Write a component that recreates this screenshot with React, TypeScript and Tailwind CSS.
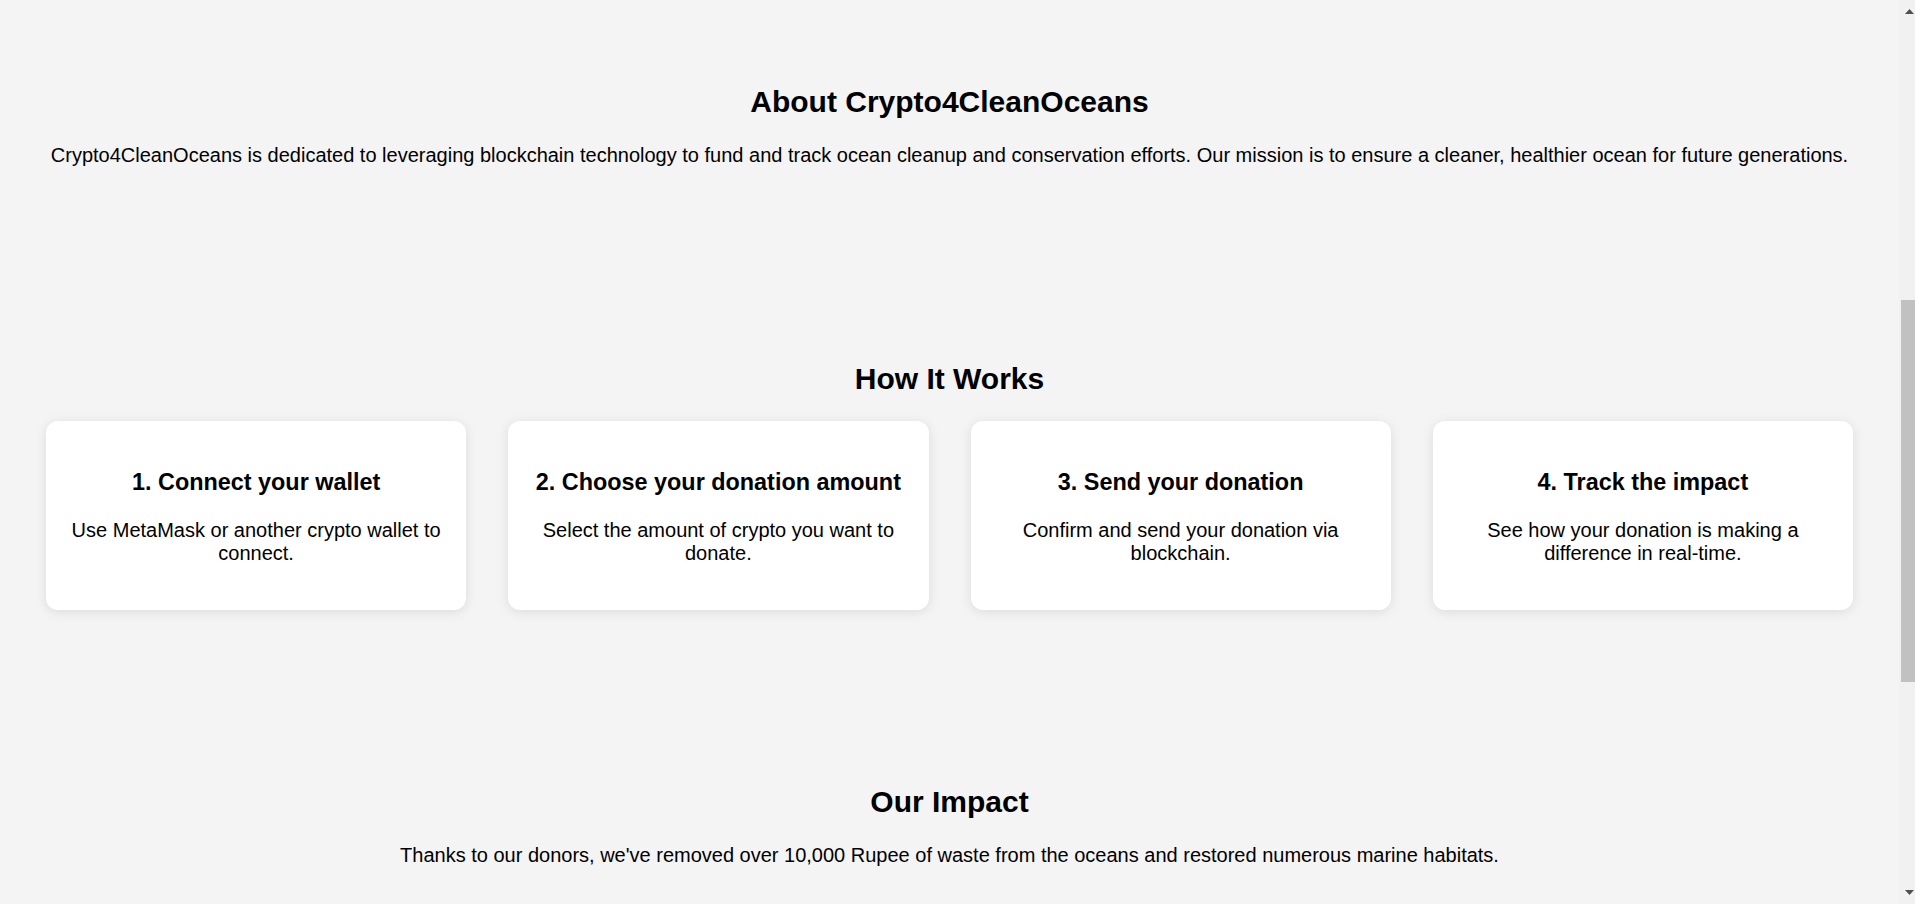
import React from "react";

const steps = [
  { title: "1. Connect your wallet", text: "Use MetaMask or another crypto wallet to connect." },
  { title: "2. Choose your donation amount", text: "Select the amount of crypto you want to donate." },
  { title: "3. Send your donation", text: "Confirm and send your donation via blockchain." },
  { title: "4. Track the impact", text: "See how your donation is making a difference in real-time." },
];

function Scrollbar() {
  return (
    <div className="flex w-[16px] shrink-0 flex-col bg-[#f1f1f1]">
      <div className="flex pl-[6px] pt-[9px]">
        <svg width="9" height="5" viewBox="0 0 9 5">
          <polygon points="4.5,0 9,5 0,5" fill="#505050" />
        </svg>
      </div>
      <div className="ml-[2px] mt-[286px] h-[382px] bg-[#c1c1c1]" />
      <div className="flex-1" />
      <div className="flex pb-[9px] pl-[6px]">
        <svg width="9" height="5" viewBox="0 0 9 5">
          <polygon points="0,0 9,0 4.5,5" fill="#505050" />
        </svg>
      </div>
    </div>
  );
}

export default function App() {
  return (
    <div
      className="flex h-screen overflow-hidden bg-[#f4f4f4] leading-[normal] text-black"
      style={{ fontFamily: '"Liberation Sans", Arial, sans-serif' }}
    >
      <main className="min-w-0 flex-1 overflow-hidden text-center">
        <section className="px-[25px] pt-[60px] pb-[150px]">
          <h2 className="my-[24.9px] text-[30px] font-bold">About Crypto4CleanOceans</h2>
          <p className="my-[20px] text-[20px]">
            Crypto4CleanOceans is dedicated to leveraging blockchain technology to fund and track ocean cleanup and
            conservation efforts. Our mission is to ensure a cleaner, healthier ocean for future generations.
          </p>
        </section>
        <section className="pb-[150px]">
          <h2 className="my-[24.9px] text-[30px] font-bold">How It Works</h2>
          <div className="grid grid-cols-4 gap-[42px] px-[46px]">
            {steps.map((s) => (
              <div
                key={s.title}
                className="rounded-[12px] bg-white p-[25px] shadow-[0_2px_12px_rgba(0,0,0,0.1)]"
              >
                <h3 className="mt-[23px] mb-[23.4px] whitespace-nowrap text-[23.4px] font-bold">{s.title}</h3>
                <p className="mt-[23px] mb-[20px] text-[20px]">{s.text}</p>
              </div>
            ))}
          </div>
        </section>
        <section className="px-[25px]">
          <h2 className="my-[24.9px] text-[30px] font-bold">Our Impact</h2>
          <p className="my-[20px] text-[20px]">
            Thanks to our donors, we've removed over 10,000 Rupee of waste from the oceans and restored numerous marine
            habitats.
          </p>
        </section>
      </main>
      <Scrollbar />
    </div>
  );
}
